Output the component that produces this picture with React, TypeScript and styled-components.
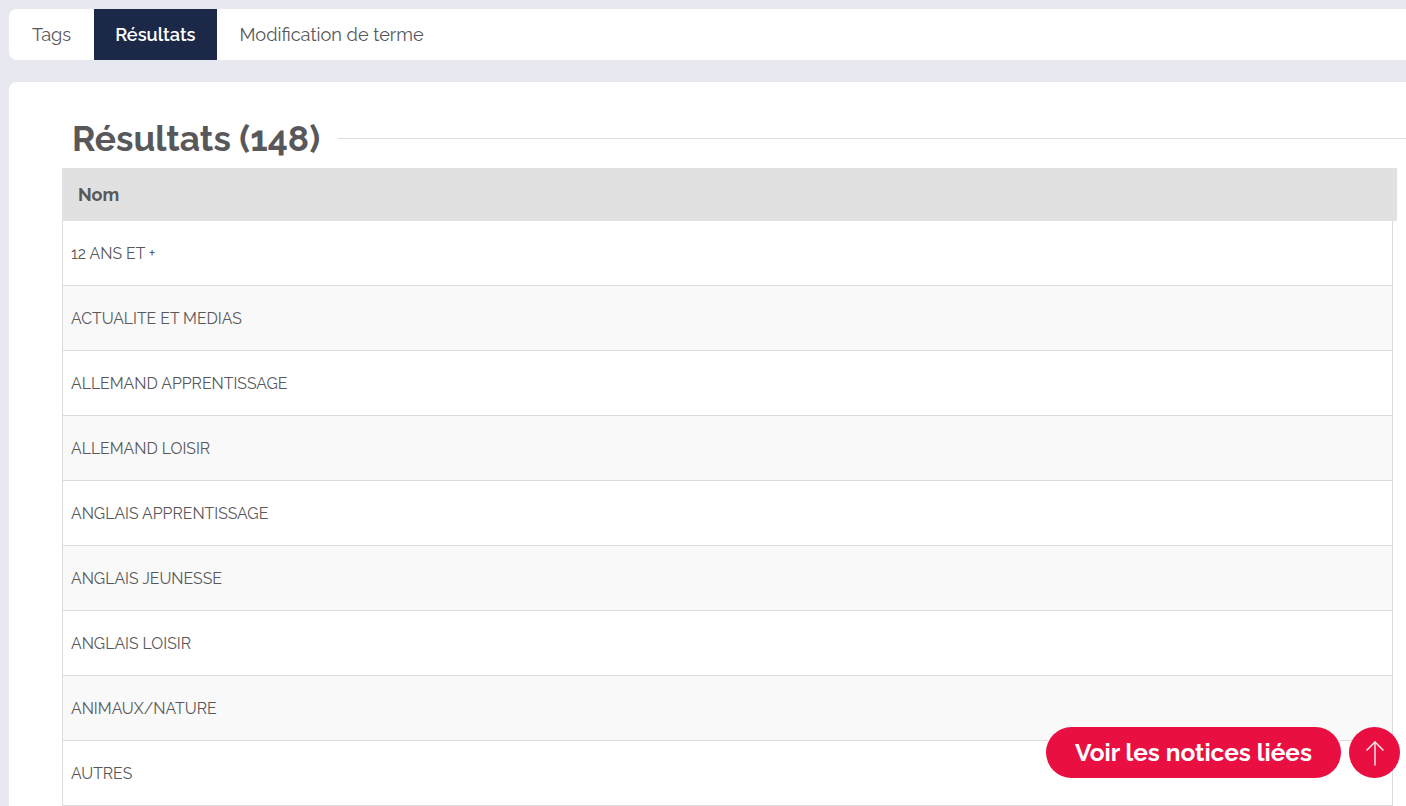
import React from "react";
import styled, { createGlobalStyle } from "styled-components";

const Global = createGlobalStyle`
  html, body { margin: 0; padding: 0; overflow: hidden; }
  body { background: #e8e8f1; font-family: "Raleway", "Lato", "Noto Sans", sans-serif; color: #58585a; }
`;

const Page = styled.div`
  padding: 9px 0 0 9px;
  display: flex;
  flex-direction: column;
  gap: 22px;
  height: 806px;
  box-sizing: border-box;
`;

const TabBar = styled.nav`
  display: flex;
  height: 51px;
  background: #fff;
  border-radius: 8px 0 0 8px;
  overflow: hidden;
`;

const Tab = styled.button<{ $active?: boolean }>`
  border: none;
  margin: 0;
  padding: ${(p) => (p.$active ? "0 21px" : "0 23px")};
  font-family: inherit;
  font-size: 18.2px;
  font-weight: ${(p) => (p.$active ? 600 : 400)};
  background: ${(p) => (p.$active ? "#1b2847" : "transparent")};
  color: ${(p) => (p.$active ? "#fff" : "#58585a")};
  cursor: pointer;
`;

const Card = styled.section`
  flex: 1;
  background: #fff;
  border-radius: 8px 0 0 0;
  padding: 35px 0 0 53px;
  display: flex;
  flex-direction: column;
  overflow: hidden;
  position: relative;
`;

const TitleRow = styled.div`
  display: flex;
  align-items: center;
  gap: 18px;
  margin: 0 0 8px 10px;
  height: 56px;
`;

const Title = styled.h2`
  margin: 0;
  font-size: 35.3px;
  font-weight: 700;
  color: #58585a;
  white-space: nowrap;
`;

const Rule = styled.div`
  flex: 1;
  height: 1px;
  background: #dcdcdc;
`;

const Table = styled.div`
  margin-right: 9px;
  display: flex;
  flex-direction: column;
`;

const HeadRow = styled.div`
  height: 53px;
  background: #e1e1e1;
  display: flex;
  align-items: center;
  padding-left: 16px;
  font-size: 18px;
  font-weight: 700;
  color: #58585a;
`;

const Body = styled.div`
  margin-right: 4px;
  border-left: 1px solid #dcdcdc;
  border-right: 1px solid #dcdcdc;
`;

const Row = styled.div<{ $odd: boolean }>`
  height: 64px;
  border-bottom: 1px solid #dcdcdc;
  background: ${(p) => (p.$odd ? "#f9f9f9" : "#fff")};
  display: flex;
  align-items: center;
  padding-left: 8px;
  font-size: 15.8px;
  color: #58585a;
`;

const Floating = styled.div`
  position: absolute;
  right: 6px;
  bottom: 28px;
  display: flex;
  gap: 8px;
`;

const PillButton = styled.button`
  height: 51px;
  padding: 0 29px;
  border: none;
  border-radius: 26px;
  background: #e91041;
  color: #fff;
  font-family: inherit;
  font-size: 24.4px;
  font-weight: 700;
  cursor: pointer;
`;

const RoundButton = styled.button`
  width: 51px;
  height: 51px;
  border: none;
  border-radius: 50%;
  background: #e91041;
  display: flex;
  align-items: center;
  justify-content: center;
  padding: 0;
  cursor: pointer;
`;

const rows = [
  "12 ANS ET +",
  "ACTUALITE ET MEDIAS",
  "ALLEMAND APPRENTISSAGE",
  "ALLEMAND LOISIR",
  "ANGLAIS APPRENTISSAGE",
  "ANGLAIS JEUNESSE",
  "ANGLAIS LOISIR",
  "ANIMAUX/NATURE",
  "AUTRES",
];

export default function App() {
  return (
    <>
      <Global />
      <Page>
        <TabBar>
          <Tab>Tags</Tab>
          <Tab $active>Résultats</Tab>
          <Tab>Modification de terme</Tab>
        </TabBar>
        <Card>
          <TitleRow>
            <Title>Résultats (148)</Title>
            <Rule />
          </TitleRow>
          <Table>
            <HeadRow>Nom</HeadRow>
            <Body>
              {rows.map((r, i) => (
                <Row key={r} $odd={i % 2 === 1}>
                  {r}
                </Row>
              ))}
            </Body>
          </Table>
          <Floating>
            <PillButton>Voir les notices liées</PillButton>
            <RoundButton aria-label="Haut de page">
              <svg width="20" height="26" viewBox="0 0 20 26" fill="none" stroke="#fff" strokeWidth="1.3" strokeLinecap="round" strokeLinejoin="round">
                <path d="M10 25V2" />
                <path d="M2 10l8-8 8 8" />
              </svg>
            </RoundButton>
          </Floating>
        </Card>
      </Page>
    </>
  );
}
